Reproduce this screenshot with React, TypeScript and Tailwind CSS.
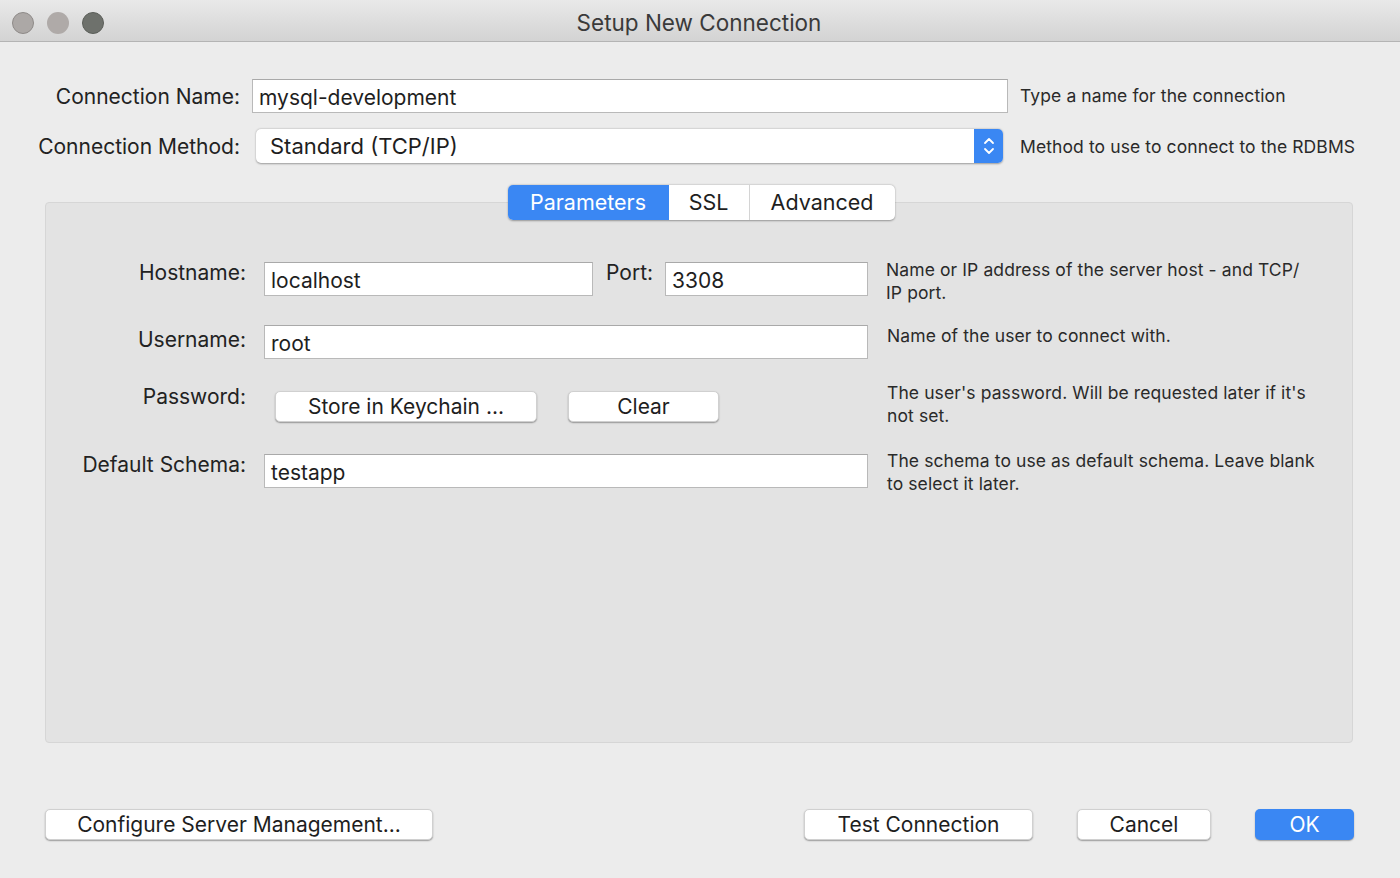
const font = { fontFamily: "Inter, 'Liberation Sans', sans-serif" };

const TextField = ({ value, className }: { value: string; className: string }) => (
  <div
    className={
      "h-[34px] bg-white border border-[#b9b9b9] border-t-[#a9a9a9] flex items-center px-[6px] pt-[3px] text-[21px] text-[#1e1e1e] " +
      className
    }
  >
    {value}
  </div>
);

const PushButton = ({
  label,
  className,
  primary,
}: {
  label: string;
  className: string;
  primary?: boolean;
}) => (
  <div
    className={
      "h-[31px] rounded-[5px] flex items-center justify-center text-[21px] shadow-[0_1px_1.5px_rgba(0,0,0,0.35)] " +
      (primary
        ? "bg-[#3a87f3] text-white"
        : "bg-white text-[#1e1e1e] border-[0.5px] border-[#d0d0d0]") +
      " " +
      className
    }
  >
    {label}
  </div>
);

const Help = ({ lines }: { lines: string[] }) => (
  <div className="text-[17.5px] leading-[23px] text-[#2a2a2a] tracking-[0.1px]">
    {lines.map((l) => (
      <div key={l}>{l}</div>
    ))}
  </div>
);

const App = () => {
  return (
    <div
      className="w-[1400px] h-[878px] bg-[#ececec] flex flex-col overflow-hidden"
      style={font}
    >
      {/* title bar */}
      <div className="h-[42px] shrink-0 pt-[5px] bg-gradient-to-b from-[#e9e9e9] to-[#d3d3d3] border-b border-[#b4b4b4] flex items-center">
        <div className="flex gap-[13px] pl-[12px]">
          <div className="w-[22px] h-[22px] rounded-full bg-[#aca8a6] border border-[#8e8a88]" />
          <div className="w-[22px] h-[22px] rounded-full bg-[#afaaa8]" />
          <div className="w-[22px] h-[22px] rounded-full bg-[#6e716c] border border-[#5b5e59]" />
        </div>
        <div className="flex-1 text-center text-[22.5px] text-[#3a3a3a] pr-[106px]">
          Setup New Connection
        </div>
      </div>

      {/* connection name */}
      <div className="flex items-center mt-[37px]">
        <div className="w-[240px] text-right text-[21px] text-[#222] mt-[1px]">Connection Name:</div>
        <TextField value="mysql-development" className="ml-[12px] w-[756px]" />
        <div className="ml-[12px] -mt-[2px]">
          <Help lines={["Type a name for the connection"]} />
        </div>
      </div>

      {/* connection method */}
      <div className="flex items-center mt-[16px]">
        <div className="w-[240px] text-right text-[21px] text-[#222] mt-[2px]">Connection Method:</div>
        <div className="ml-[16px] w-[747px] h-[34px] flex bg-white rounded-[5px] shadow-[0_0.5px_2px_rgba(0,0,0,0.35)]">
          <div className="flex-1 flex items-center pl-[14px] text-[22px] text-[#1e1e1e]">
            Standard (TCP/IP)
          </div>
          <div className="w-[29px] bg-[#3a87f3] rounded-r-[5px] flex items-center justify-center">
            <svg width="14" height="22" viewBox="0 0 14 22" fill="none" stroke="white" strokeWidth="1.8" strokeLinecap="round" strokeLinejoin="round">
              <path d="M3 8l4-4 4 4" />
              <path d="M3 14l4 4 4-4" />
            </svg>
          </div>
        </div>
        <div className="ml-[17px]">
          <Help lines={["Method to use to connect to the RDBMS"]} />
        </div>
      </div>

      {/* tab view */}
      <div className="relative z-10 flex justify-center mt-[22px] pl-[2px]">
        <div className="flex h-[35px] rounded-[5px] bg-white shadow-[0_0.5px_2px_rgba(0,0,0,0.35)] text-[21.5px] text-[#1e1e1e]">
          <div className="w-[161px] bg-[#3a87f3] text-white rounded-l-[5px] flex items-center justify-center">
            Parameters
          </div>
          <div className="w-[81px] flex items-center justify-center border-r border-[#d4d4d4]">
            SSL
          </div>
          <div className="w-[145px] flex items-center justify-center">Advanced</div>
        </div>
      </div>

      <div className="mx-[45px] w-[1308px] h-[541px] -mt-[18px] bg-[#e3e3e3] border border-[#d6d6d6] rounded-[4px] flex flex-col text-[#222]">
        {/* hostname */}
        <div className="flex items-start h-[34px] mt-[59px]">
          <div className="w-[200px] text-right text-[21px] -mt-[5px]">Hostname:</div>
          <TextField value="localhost" className="ml-[18px] w-[329px]" />
          <div className="ml-[13px] text-[21px] -mt-[5px]">Port:</div>
          <TextField value="3308" className="ml-[12px] w-[203px]" />
          <div className="ml-[18px] -mt-[4px]">
            <Help lines={["Name or IP address of the server host - and TCP/", "IP port."]} />
          </div>
        </div>

        {/* username */}
        <div className="flex items-start h-[34px] mt-[29px]">
          <div className="w-[200px] text-right text-[21px] -mt-[1px]">Username:</div>
          <TextField value="root" className="ml-[18px] w-[604px]" />
          <div className="ml-[19px] -mt-[1px]">
            <Help lines={["Name of the user to connect with."]} />
          </div>
        </div>

        {/* password */}
        <div className="flex items-start h-[31px] mt-[32px]">
          <div className="w-[200px] text-right text-[21px] -mt-[10px]">Password:</div>
          <PushButton label="Store in Keychain ..." className="ml-[29px] w-[262px]" />
          <PushButton label="Clear" className="ml-[31px] w-[151px]" />
          <div className="ml-[168px] -mt-[10px]">
            <Help lines={["The user's password. Will be requested later if it's", "not set."]} />
          </div>
        </div>

        {/* default schema */}
        <div className="flex items-start h-[34px] mt-[32px]">
          <div className="w-[200px] text-right text-[21px] -mt-[5px]">Default Schema:</div>
          <TextField value="testapp" className="ml-[18px] w-[604px]" />
          <div className="ml-[19px] -mt-[5px]">
            <Help lines={["The schema to use as default schema. Leave blank", "to select it later."]} />
          </div>
        </div>
      </div>

      {/* bottom buttons */}
      <div className="flex items-center mt-[66px] pl-[45px]">
        <PushButton label="Configure Server Management..." className="w-[388px]" />
        <PushButton label="Test Connection" className="ml-[371px] w-[229px]" />
        <PushButton label="Cancel" className="ml-[44px] w-[134px]" />
        <PushButton label="OK" primary className="ml-[44px] w-[99px]" />
      </div>
    </div>
  );
};

export default App;
